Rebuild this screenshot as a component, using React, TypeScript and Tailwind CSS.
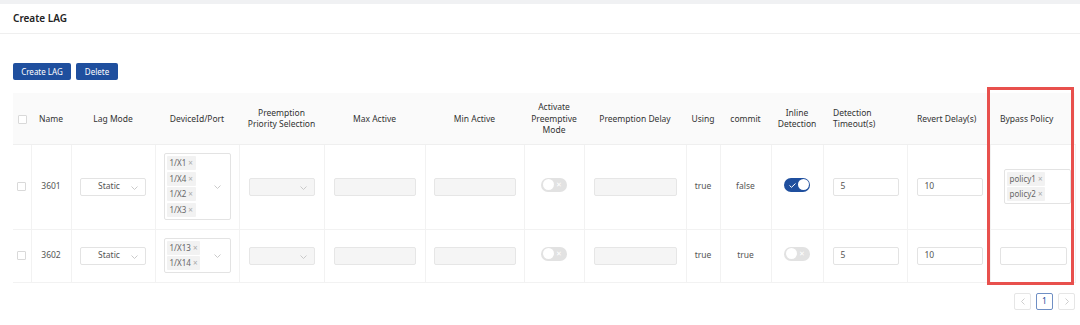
import { ReactNode } from 'react';

const Chevron = ({ className = '' }: { className?: string }) => (
  <svg width="7" height="4" viewBox="0 0 7 4" className={className}>
    <path d="M0.5 0.5 L3.5 3.5 L6.5 0.5" fill="none" stroke="#c4c4c4" strokeWidth="0.9" />
  </svg>
);

const Checkbox = () => (
  <span className="inline-block w-[9px] h-[9px] border border-[#d9d9d9] rounded-[1px] bg-white align-middle" />
);

const Select = ({ value, disabled }: { value?: string; disabled?: boolean }) => (
  <div
    className={`w-[66px] h-[18px] mx-auto border rounded-[2px] flex items-center relative ${
      disabled ? 'bg-[#f5f5f5] border-[#e6e6e6]' : 'bg-white border-[#e3e3e3]'
    }`}
  >
    <span className="flex-1 text-center text-[8.5px] text-[#555] pr-[8px]">{value}</span>
    <Chevron className="absolute right-[7px] top-[7px]" />
  </div>
);

const Tag = ({ label }: { label: string }) => (
  <span className="inline-flex items-center h-[14px] px-[3px] bg-[#f2f2f2] text-[8px] text-[#666] rounded-[1px] w-fit">
    {label}
    <span className="ml-[2px] text-[#aaa] text-[8px]">×</span>
  </span>
);

const MultiSelect = ({ tags, chevron = true }: { tags: string[]; chevron?: boolean }) => (
  <div className="w-[67px] mx-auto border border-[#e3e3e3] rounded-[2px] bg-white px-[2px] py-[2px] flex items-center relative">
    <div className="flex flex-col gap-[1.5px]">
      {tags.map((t) => (
        <Tag key={t} label={t} />
      ))}
    </div>
    {chevron && <Chevron className="absolute right-[9px] top-1/2 -translate-y-1/2" />}
  </div>
);

const Input = ({ value, disabled, w = 'w-[82px]' }: { value?: string; disabled?: boolean; w?: string }) => (
  <div
    className={`${w} h-[18px] border rounded-[2px] flex items-center px-[7px] text-[8.5px] text-[#555] ${
      disabled ? 'bg-[#f5f5f5] border-[#e6e6e6] mx-auto' : 'bg-white border-[#e3e3e3]'
    }`}
  >
    {value}
  </div>
);

const Toggle = ({ on }: { on?: boolean }) =>
  on ? (
    <span className="relative inline-flex items-center w-[26px] h-[14px] rounded-full bg-[#1f4f9e]">
      <svg width="7" height="5" viewBox="0 0 7 5" className="absolute left-[5px] top-[5px]">
        <path d="M0.5 2.5 L2.5 4.3 L6.5 0.5" fill="none" stroke="#fff" strokeWidth="1" />
      </svg>
      <span className="absolute right-[1.5px] w-[11px] h-[11px] rounded-full bg-white" />
    </span>
  ) : (
    <span className="relative inline-flex items-center w-[26px] h-[14px] rounded-full bg-[#cfcfcf] opacity-60">
      <span className="absolute left-[1.5px] w-[11px] h-[11px] rounded-full bg-white" />
      <span className="absolute right-[5px] text-[7px] text-white leading-none">✕</span>
    </span>
  );

const Th = ({ children, left }: { children?: ReactNode; left?: boolean }) => (
  <th
    className={`font-normal text-[8.5px] leading-[11.5px] text-[#333] border-b border-[#efefef] ${
      left ? 'text-left pl-[10px]' : 'text-center'
    }`}
  >
    {children}
  </th>
);

const Td = ({ children, left }: { children?: ReactNode; left?: boolean }) => (
  <td
    className={`text-[8.5px] text-[#555] border-b border-r border-[#f2f2f2] ${
      left ? 'text-left pl-[9px]' : 'text-center'
    }`}
  >
    {children}
  </td>
);

type Row = {
  name: string;
  ports: string[];
  using: string;
  commit: string;
  inline: boolean;
  policies: string[];
  h: string;
};

const rows: Row[] = [
  { name: '3601', ports: ['1/X1', '1/X4', '1/X2', '1/X3'], using: 'true', commit: 'false', inline: true, policies: ['policy1', 'policy2'], h: 'h-[85px]' },
  { name: '3602', ports: ['1/X13', '1/X14'], using: 'true', commit: 'true', inline: false, policies: [], h: 'h-[53px]' },
];

export default function App() {
  return (
    <div className="w-[1080px] h-[325px] bg-white overflow-hidden" style={{ fontFamily: '"Noto Sans", "Open Sans", sans-serif' }}>
      <div className="h-[4px] bg-[#f0f1f3]" />
      <div className="h-[30px] flex items-center px-[13px] border-b border-[#efefef]">
        <span className="text-[10px] font-semibold text-[#222]">Create LAG</span>
      </div>

      <div className="px-[13px]">
        <div className="mt-[29px] flex gap-[5px]">
          <button className="h-[17px] w-[58px] rounded-[2px] bg-[#1f4f9e] text-white text-[8px]">Create LAG</button>
          <button className="h-[17px] w-[42px] rounded-[2px] bg-[#1f4f9e] text-white text-[8px]">Delete</button>
        </div>

        <div className="relative mt-[13px]">
          <table className="table-fixed border-collapse w-[1062px]">
            <colgroup>
              <col className="w-[18px]" />
              <col className="w-[40px]" />
              <col className="w-[84px]" />
              <col className="w-[84px]" />
              <col className="w-[85px]" />
              <col className="w-[101px]" />
              <col className="w-[99px]" />
              <col className="w-[60px]" />
              <col className="w-[102px]" />
              <col className="w-[34px]" />
              <col className="w-[51px]" />
              <col className="w-[52px]" />
              <col className="w-[84px]" />
              <col className="w-[83px]" />
              <col className="w-[85px]" />
            </colgroup>
            <thead>
              <tr className="h-[51px] bg-[#fafafa]">
                <Th>
                  <Checkbox />
                </Th>
                <Th>Name</Th>
                <Th>Lag Mode</Th>
                <Th>DeviceId/Port</Th>
                <Th>
                  Preemption
                  <br />
                  Priority Selection
                </Th>
                <Th>Max Active</Th>
                <Th>Min Active</Th>
                <Th>
                  Activate
                  <br />
                  Preemptive
                  <br />
                  Mode
                </Th>
                <Th>Preemption Delay</Th>
                <Th>Using</Th>
                <Th>commit</Th>
                <Th>
                  Inline
                  <br />
                  Detection
                </Th>
                <Th left>
                  Detection
                  <br />
                  Timeout(s)
                </Th>
                <Th left>Revert Delay(s)</Th>
                <Th left>Bypass Policy</Th>
              </tr>
            </thead>
            <tbody>
              {rows.map((r) => (
                <tr key={r.name} className={r.h}>
                  <Td>
                    <Checkbox />
                  </Td>
                  <Td>{r.name}</Td>
                  <Td>
                    <Select value="Static" />
                  </Td>
                  <Td>
                    <MultiSelect tags={r.ports} />
                  </Td>
                  <Td>
                    <Select disabled />
                  </Td>
                  <Td>
                    <Input disabled />
                  </Td>
                  <Td>
                    <Input disabled />
                  </Td>
                  <Td>
                    <Toggle />
                  </Td>
                  <Td>
                    <Input disabled w="w-[83px]" />
                  </Td>
                  <Td>{r.using}</Td>
                  <Td>{r.commit}</Td>
                  <Td>
                    <Toggle on={r.inline} />
                  </Td>
                  <Td left>
                    <Input value="5" w="w-[66px]" />
                  </Td>
                  <Td left>
                    <Input value="10" w="w-[66px]" />
                  </Td>
                  <Td left>
                    {r.policies.length ? (
                      <MultiSelect tags={r.policies} chevron={false} />
                    ) : (
                      <div className="w-[67px] h-[18px] border border-[#e3e3e3] rounded-[2px] bg-white" />
                    )}
                  </Td>
                </tr>
              ))}
            </tbody>
          </table>
          <div className="absolute left-[974px] top-[-6px] w-[87px] h-[198px] border-[3px] border-[#e8504d]" />
        </div>

        <div className="mt-[10px] flex justify-end gap-[5px] mr-[-8px]">
          <span className="w-[17px] h-[17px] border border-[#e6e6e6] rounded-[2px] flex items-center justify-center">
            <svg width="4" height="7" viewBox="0 0 4 7">
              <path d="M3.5 0.5 L0.5 3.5 L3.5 6.5" fill="none" stroke="#c8c8c8" strokeWidth="0.9" />
            </svg>
          </span>
          <span className="w-[17px] h-[17px] border border-[#6f8fc4] rounded-[2px] flex items-center justify-center text-[8.5px] text-[#1f4f9e]">
            1
          </span>
          <span className="w-[17px] h-[17px] border border-[#e6e6e6] rounded-[2px] flex items-center justify-center">
            <svg width="4" height="7" viewBox="0 0 4 7">
              <path d="M0.5 0.5 L3.5 3.5 L0.5 6.5" fill="none" stroke="#c8c8c8" strokeWidth="0.9" />
            </svg>
          </span>
        </div>
      </div>
    </div>
  );
}
